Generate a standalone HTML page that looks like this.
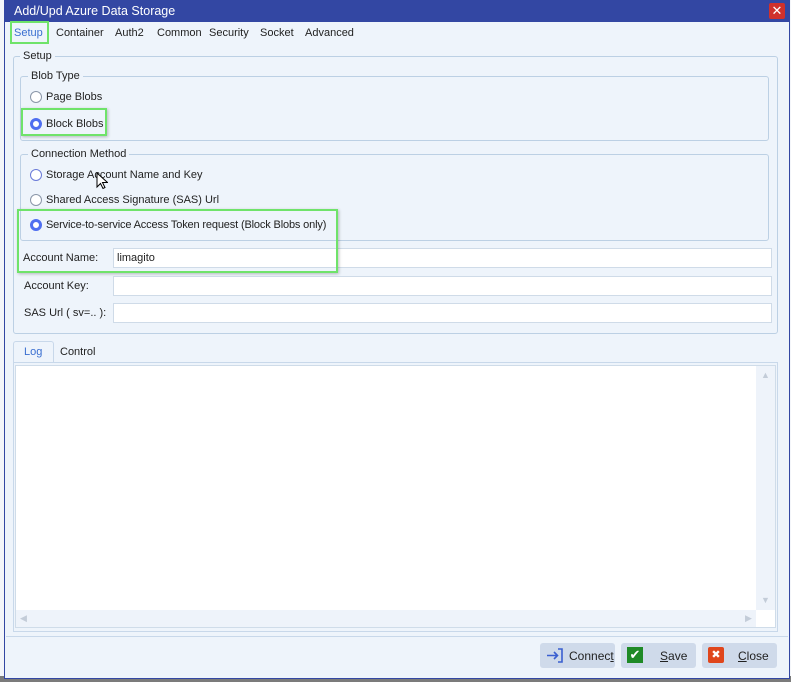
<!DOCTYPE html>
<html><head><style>
*{box-sizing:border-box;margin:0;padding:0}
body{width:791px;height:682px;position:relative;overflow:hidden;background:#f4f6fa;font-family:"Liberation Sans",Arial,sans-serif;font-size:11px;color:#222}
.abs{position:absolute}
.win{left:4px;top:0;width:786px;height:679px;background:#eef4fb;border:1px solid #3347a3;border-top:none}
.title{left:4px;top:0;width:786px;height:22px;background:#3347a3;color:#fff;font-size:12.5px;padding:4px 0 0 10px}
.grp{border:1px solid #bcd0e4;border-radius:3px}
.lg{background:#eef4fb;padding:0 3px}
.radio{width:12px;height:12px;border-radius:50%;border:1px solid #8a96a8;background:#fff}
.radio.on{border:3px solid #4f6ef0}
.inp{background:#fff;border:1px solid #cfdbe8;height:20px;padding:3px 3px}
.green{border:2px solid #6fe36a;box-shadow:1px 1px 3px rgba(0,0,0,.25)}
.btn{background:#cfdaea;border-radius:3px;height:25px;top:643px;font-size:12px}
.tab{top:27px}
</style></head><body>
<div class="abs" style="left:0;top:676px;width:791px;height:6px;background:#7b7b7b"></div>
<div class="abs win"></div>
<div class="abs title">Add/Upd Azure Data Storage</div>
<div class="abs" style="left:769px;top:3px;width:16px;height:16px;background:#d0312d;border-radius:2px;color:#fff;font-size:13px;text-align:center;line-height:16px">✕</div>
<div class="abs tab" style="left:14px;color:#3a6fd0">Setup</div>
<div class="abs tab" style="left:56px">Container</div>
<div class="abs tab" style="left:115px">Auth2</div>
<div class="abs tab" style="left:157px">Common</div>
<div class="abs tab" style="left:209px">Security</div>
<div class="abs tab" style="left:260px">Socket</div>
<div class="abs tab" style="left:305px">Advanced</div>
<div class="abs green" style="left:10px;top:21px;width:39px;height:23px;box-shadow:none"></div>
<div class="abs grp" style="left:13px;top:56px;width:765px;height:278px"></div>
<div class="abs lg" style="left:20px;top:50px">Setup</div>
<div class="abs grp" style="left:20px;top:76px;width:749px;height:65px"></div>
<div class="abs lg" style="left:28px;top:70px">Blob Type</div>
<div class="abs radio" style="left:30px;top:91px"></div>
<div class="abs" style="left:46px;top:91px">Page Blobs</div>
<div class="abs green" style="left:21px;top:108px;width:86px;height:28px"></div>
<div class="abs radio on" style="left:30px;top:118px"></div>
<div class="abs" style="left:46px;top:118px">Block Blobs</div>
<div class="abs grp" style="left:20px;top:154px;width:749px;height:87px"></div>
<div class="abs lg" style="left:28px;top:148px">Connection Method</div>
<div class="abs radio" style="left:30px;top:169px;border-color:#6a7ad8"></div>
<div class="abs" style="left:46px;top:169px">Storage Account Name and Key</div>
<div class="abs radio" style="left:30px;top:194px"></div>
<div class="abs" style="left:46px;top:194px">Shared Access Signature (SAS) Url</div>
<div class="abs radio on" style="left:30px;top:219px"></div>
<div class="abs" style="left:46px;top:219px;letter-spacing:-0.15px">Service-to-service Access Token request (Block Blobs only)</div>
<div class="abs" style="left:23px;top:252px">Account Name:</div>
<div class="abs inp" style="left:113px;top:248px;width:659px">limagito</div>
<div class="abs green" style="left:17px;top:209px;width:321px;height:64px;box-shadow:1px 1px 3px rgba(0,0,0,.25)"></div>
<div class="abs" style="left:24px;top:280px">Account Key:</div>
<div class="abs inp" style="left:113px;top:276px;width:659px"></div>
<div class="abs" style="left:24px;top:307px">SAS Url ( sv=.. ):</div>
<div class="abs inp" style="left:113px;top:303px;width:659px"></div>
<div class="abs" style="left:13px;top:341px;width:41px;height:22px;background:#eef4fb;border:1px solid #c8d8ea;border-bottom:none;border-radius:3px 3px 0 0;color:#3a6fd0;padding:4px 0 0 10px">Log</div>
<div class="abs" style="left:60px;top:346px">Control</div>
<div class="abs" style="left:13px;top:362px;width:765px;height:270px;border:1px solid #c8d8ea;background:#eef4fb"></div>
<div class="abs" style="left:15px;top:365px;width:761px;height:263px;background:#fff;border:1px solid #cfdce9"></div>
<div class="abs" style="left:756px;top:366px;width:19px;height:244px;background:#eef3fa"></div>
<div class="abs" style="left:16px;top:610px;width:740px;height:17px;background:#eef3fa"></div>
<div class="abs" style="left:761px;top:370px;color:#c3ccd8;font-size:9px">▲</div>
<div class="abs" style="left:761px;top:595px;color:#c3ccd8;font-size:9px">▼</div>
<div class="abs" style="left:20px;top:613px;color:#c3ccd8;font-size:9px">◀</div>
<div class="abs" style="left:745px;top:613px;color:#c3ccd8;font-size:9px">▶</div>
<div class="abs" style="left:6px;top:636px;width:782px;height:1px;background:#c8d8ea"></div>
<div class="abs btn" style="left:540px;width:75px">
<svg class="abs" style="left:6px;top:5px" width="18" height="15"><path d="M1 7.5h10M8 4l3.5 3.5L8 11M12 1h4v13h-4" stroke="#3a5fd0" stroke-width="1.6" fill="none"/></svg>
<span class="abs" style="left:29px;top:6px">Connec<u>t</u></span></div>
<div class="abs btn" style="left:621px;width:75px">
<div class="abs" style="left:6px;top:4px;width:16px;height:16px;background:#1f8a26;color:#fff;font-size:13px;text-align:center;line-height:16px">✔</div>
<span class="abs" style="left:39px;top:6px"><u>S</u>ave</span></div>
<div class="abs btn" style="left:702px;width:75px">
<div class="abs" style="left:6px;top:4px;width:16px;height:16px;background:#e0461c;color:#fff;font-size:11px;text-align:center;line-height:16px;border-radius:2px">✖</div>
<span class="abs" style="left:36px;top:6px"><u>C</u>lose</span></div>
<svg class="abs" style="left:96px;top:172px" width="12" height="18"><path d="M1 1v14l3.5-3.5 2.5 5 2-1-2.5-5h5z" fill="#fff" stroke="#000" stroke-width="1"/></svg>
</body></html>
